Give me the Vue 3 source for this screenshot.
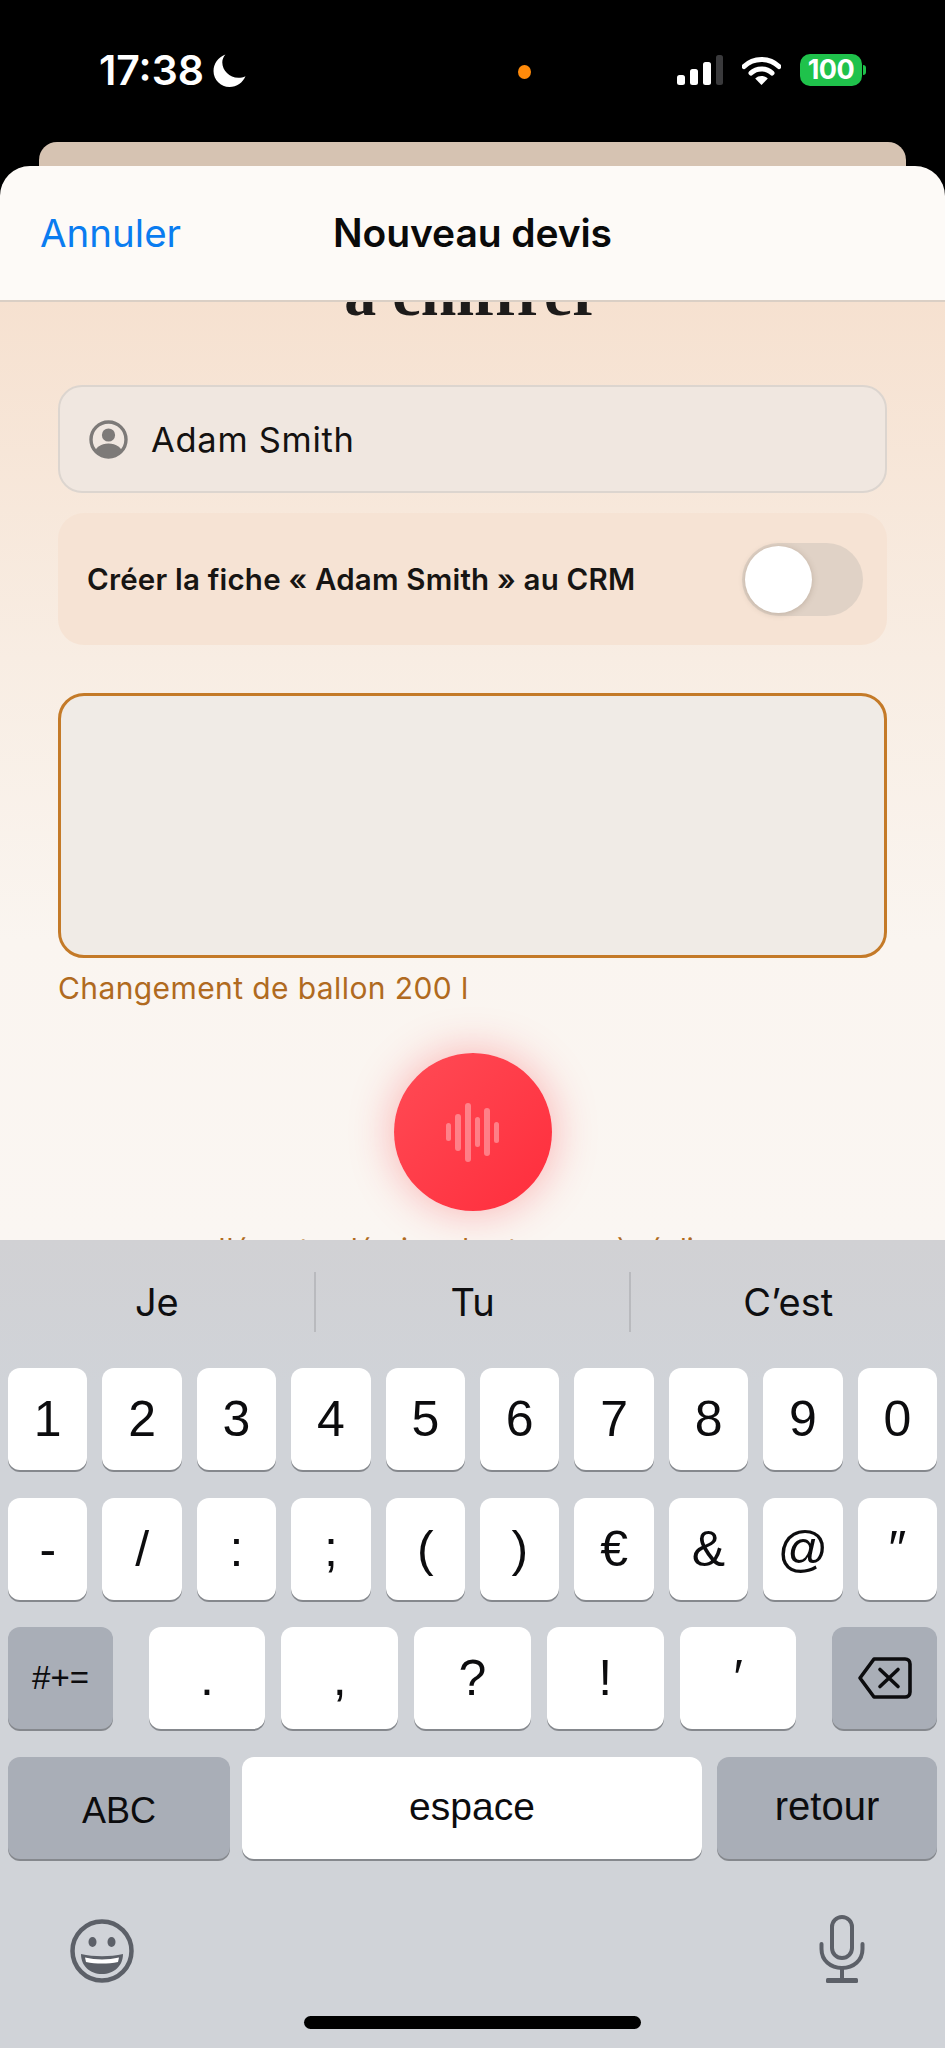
<template>
  <div class="phone">
    <div class="status">
      <div class="status-left">
        <span class="time">17:38</span>
        <svg class="moon" viewBox="0 0 32 32" width="33" height="33">
          <path d="M12 0.5C5 3 0.5 9.5 0.5 16.5C0.5 25 7.5 32 16 32C23 32 29 27.5 31.5 21.5C29.5 22.6 27 23 24.5 23C16 23 9 16 9 8C9 5.5 10.2 2.5 12 0.5Z" fill="#fff" />
        </svg>
      </div>
      <span class="cam-dot"></span>
      <div class="status-right">
        <svg width="46" height="30" viewBox="0 0 46 30">
          <rect x="0" y="20" width="8" height="10" rx="2.5" fill="#fff" />
          <rect x="13" y="14" width="8" height="16" rx="2.5" fill="#fff" />
          <rect x="26" y="7" width="8" height="23" rx="2.5" fill="#fff" />
          <rect x="39" y="0" width="7" height="30" rx="2.5" fill="#3a3a3c" />
        </svg>
        <svg width="39" height="29" viewBox="0 0 39 29">
          <path d="M2 10.5C11.5 1 27.5 1 37 10.5" fill="none" stroke="#fff" stroke-width="5" stroke-linecap="round" />
          <path d="M9 17C14.5 11.5 24.5 11.5 30 17" fill="none" stroke="#fff" stroke-width="5" stroke-linecap="round" />
          <path d="M13.2 22.5C16.5 19.2 22.5 19.2 25.8 22.5L19.5 29Z" fill="#fff" />
        </svg>
        <div class="battery">
          <span class="battery-body">100</span>
          <span class="battery-nub"></span>
        </div>
      </div>
    </div>

    <div class="back-card"></div>

    <section class="sheet">
      <header class="sheet-header">
        <span class="cancel">Annuler</span>
        <h1 class="sheet-title">Nouveau devis</h1>
      </header>

      <main class="sheet-body">
        <h2 class="peek-title">à chiffrer</h2>

        <div class="name-field">
          <svg class="person" viewBox="0 0 39 39" width="39" height="39">
            <defs>
              <clipPath id="person-clip"><circle cx="19.5" cy="19.5" r="17" /></clipPath>
            </defs>
            <circle cx="19.5" cy="19.5" r="17.5" fill="none" stroke="#7d7a78" stroke-width="3.4" />
            <circle cx="19.5" cy="15" r="6.6" fill="#7d7a78" />
            <ellipse cx="19.5" cy="34" rx="14" ry="10.5" fill="#7d7a78" clip-path="url(#person-clip)" />
          </svg>
          <span class="name-value">Adam Smith</span>
        </div>

        <div class="crm-row">
          <span class="crm-label">Créer la fiche « Adam Smith » au CRM</span>
          <div class="toggle"><span class="knob"></span></div>
        </div>

        <div class="notes"></div>
        <p class="transcript">Changement de ballon 200 l</p>

        <button class="record" type="button">
          <span
            v-for="(h, i) in waveBars"
            :key="i"
            class="wave-bar"
            :style="{ height: h + 'px' }"
          ></span>
        </button>

        <p class="hint">J'écoute, décrivez les travaux à réaliser</p>
      </main>
    </section>

    <section class="keyboard">
      <div class="suggestions">
        <span v-for="word in suggestions" :key="word" class="suggestion">{{ word }}</span>
      </div>

      <div class="rows">
        <div class="row">
          <span v-for="k in digits" :key="k" class="key">{{ k }}</span>
        </div>
        <div class="row">
          <span v-for="k in symbols" :key="k" class="key">{{ k }}</span>
        </div>
        <div class="row row-third">
          <span class="key key-dark key-switch">#+=</span>
          <div class="punct">
            <span v-for="k in punctuation" :key="k" class="key">{{ k }}</span>
          </div>
          <span class="key key-dark key-switch">
            <svg width="56" height="44" viewBox="0 0 56 44">
              <path d="M17 3H48C51 3 53 5 53 8V36C53 39 51 41 48 41H17L3 22Z" fill="none" stroke="#0c0c0e" stroke-width="3.6" stroke-linejoin="round" />
              <path d="M23 13.5L41 30.5M41 13.5L23 30.5" fill="none" stroke="#0c0c0e" stroke-width="3.6" stroke-linecap="round" />
            </svg>
          </span>
        </div>
        <div class="row row-bottom">
          <span class="key key-dark key-abc">ABC</span>
          <span class="key key-space">espace</span>
          <span class="key key-dark key-return">retour</span>
        </div>
      </div>

      <div class="kb-tools">
        <svg width="64" height="64" viewBox="0 0 64 64">
          <circle cx="32" cy="32" r="29.5" fill="none" stroke="#5c6068" stroke-width="4.5" />
          <ellipse cx="22.5" cy="23" rx="4" ry="5" fill="#5c6068" />
          <ellipse cx="41.5" cy="23" rx="4" ry="5" fill="#5c6068" />
          <path d="M11 35C24 38 40 38 53 35C53 47 44 55 32 55C20 55 11 47 11 35Z" fill="#5c6068" />
          <path d="M15 38.5C26 41 38 41 49 38.5L48 43C38 45 26 45 16 43Z" fill="#fff" />
        </svg>
        <svg width="46" height="68" viewBox="0 0 46 68">
          <rect x="13" y="2" width="20" height="41" rx="10" fill="none" stroke="#5c6068" stroke-width="4" />
          <path d="M2.5 29V34C2.5 45.5 11.5 53 23 53C34.5 53 43.5 45.5 43.5 34V29" fill="none" stroke="#5c6068" stroke-width="4" stroke-linecap="round" />
          <path d="M23 53V64" stroke="#5c6068" stroke-width="4" />
          <rect x="7" y="63" width="32" height="5" rx="1.5" fill="#5c6068" />
        </svg>
      </div>

      <div class="home-bar"></div>
    </section>
  </div>
</template>

<script setup>
const waveBars = [18, 37, 59, 30, 48, 21]
const suggestions = ['Je', 'Tu', 'C’est']
const digits = ['1', '2', '3', '4', '5', '6', '7', '8', '9', '0']
const symbols = ['-', '/', ':', ';', '(', ')', '€', '&', '@', '″']
const punctuation = ['.', ',', '?', '!', '′']
</script>

<style>
html,
body {
  margin: 0;
  background: #000;
}
</style>

<style scoped>
.phone {
  width: 945px;
  height: 2048px;
  overflow: hidden;
  display: flex;
  flex-direction: column;
  background: #000;
  font-family: "Liberation Sans", Arial, sans-serif;
}

/* status bar */
.status {
  height: 142px;
  box-sizing: border-box;
  padding: 54px 79px 0 99px;
  display: flex;
  align-items: flex-start;
  color: #fff;
  flex: none;
}
.status-left {
  width: 419px;
  height: 32px;
  display: flex;
  align-items: center;
  gap: 9px;
}
.time {
  font-family: Inter, sans-serif;
  font-weight: 600;
  font-size: 41px;
  letter-spacing: 0;
  line-height: 32px;
}
.cam-dot {
  width: 13px;
  height: 14px;
  margin-top: 11px;
  border-radius: 50%;
  background: #ff8a0a;
}
.status-right {
  margin-left: auto;
  height: 32px;
  display: flex;
  align-items: center;
  gap: 19px;
}
.battery {
  display: flex;
  align-items: center;
  gap: 1px;
}
.battery-body {
  width: 62px;
  height: 32px;
  border-radius: 10px;
  background: #1fc24b;
  color: #fff;
  font-family: Inter, sans-serif;
  font-weight: 700;
  font-size: 27px;
  line-height: 32px;
  text-align: center;
  letter-spacing: -0.5px;
}
.battery-nub {
  width: 3px;
  height: 10px;
  border-radius: 0 3px 3px 0;
  background: #1fc24b;
}

.back-card {
  flex: none;
  height: 24px;
  margin: 0 39px;
  border-radius: 18px 18px 0 0;
  background: #d6c3b2;
}

/* sheet */
.sheet {
  flex: none;
  height: 1074px;
  display: flex;
  flex-direction: column;
  overflow: hidden;
  border-radius: 30px 30px 0 0;
}
.sheet-header {
  flex: none;
  height: 136px;
  box-sizing: border-box;
  position: relative;
  display: flex;
  align-items: center;
  justify-content: center;
  background: #fdfaf7;
  border-bottom: 2px solid #dacfc5;
  z-index: 1;
}
.cancel {
  position: absolute;
  left: 40px;
  top: 42px;
  font-family: Inter, sans-serif;
  font-size: 38.5px;
  line-height: 50px;
  color: #0a7cf0;
}
.sheet-title {
  margin: 0;
  font-family: Inter, sans-serif;
  font-weight: 600;
  font-size: 39px;
  line-height: 50px;
  letter-spacing: -0.1px;
  color: #0a0a0a;
}
.sheet-body {
  flex: 1;
  min-height: 0;
  overflow: hidden;
  padding: 0 58px;
  display: flex;
  flex-direction: column;
  background: linear-gradient(#f6e1d0, #f8ede3 38%, #faf5f0 68%, #faf6f2);
}
.peek-title {
  flex: none;
  margin: -38px 0 61px;
  height: 60px;
  text-align: center;
  font-family: "Liberation Serif", serif;
  font-weight: 700;
  font-size: 64px;
  line-height: 60px;
  color: #1d1b1a;
}
.name-field {
  flex: none;
  height: 108px;
  box-sizing: border-box;
  padding: 0 29px;
  display: flex;
  align-items: center;
  gap: 23px;
  border: 2.5px solid #dcd5cf;
  border-radius: 24px;
  background: #f0e7e0;
}
.person {
  flex: none;
}
.name-value {
  font-family: Inter, sans-serif;
  font-size: 34.5px;
  letter-spacing: 0.7px;
  color: #141211;
}
.crm-row {
  flex: none;
  height: 132px;
  margin-top: 20px;
  box-sizing: border-box;
  padding: 0 24px 0 29px;
  display: flex;
  align-items: center;
  justify-content: space-between;
  border-radius: 26px;
  background: #f6e3d4;
}
.crm-label {
  font-family: Inter, sans-serif;
  font-weight: 600;
  font-size: 29.5px;
  letter-spacing: 0.2px;
  color: #171513;
}
.toggle {
  width: 121px;
  height: 73px;
  box-sizing: border-box;
  padding: 3px;
  border-radius: 37px;
  background: #e0d2c6;
}
.knob {
  display: block;
  width: 67px;
  height: 67px;
  border-radius: 50%;
  background: #fff;
  box-shadow: 0 1px 6px rgba(90, 70, 50, 0.25);
}
.notes {
  flex: none;
  height: 265px;
  margin-top: 48px;
  box-sizing: border-box;
  border: 3px solid #c47a28;
  border-radius: 26px;
  background: #f0ebe6;
}
.transcript {
  flex: none;
  margin: 12px 0 0;
  font-family: Inter, sans-serif;
  font-size: 30px;
  letter-spacing: 0.4px;
  line-height: 36px;
  color: #b06a20;
}
.record {
  flex: none;
  align-self: center;
  width: 158px;
  height: 158px;
  margin-top: 47px;
  padding: 0;
  border: none;
  border-radius: 50%;
  display: flex;
  align-items: center;
  justify-content: center;
  gap: 4px;
  background: linear-gradient(135deg, #ff4b55, #ff2d3c);
  box-shadow: 0 0 44px rgba(255, 50, 60, 0.36);
}
.wave-bar {
  width: 5.6px;
  border-radius: 3px;
  background: rgba(255, 255, 255, 0.35);
}
.hint {
  flex: none;
  margin: 20px 0 0;
  text-align: center;
  font-family: Inter, sans-serif;
  font-size: 28px;
  line-height: 36px;
  color: #b06a20;
  white-space: nowrap;
}

/* keyboard */
.keyboard {
  flex: 1;
  display: flex;
  flex-direction: column;
  background: linear-gradient(#d1d1d4, #d0d3d8 18%);
}
.suggestions {
  flex: none;
  height: 128px;
  box-sizing: border-box;
  padding: 32px 0 36px;
  display: flex;
}
.suggestion {
  flex: 1;
  display: flex;
  align-items: center;
  justify-content: center;
  font-family: Inter, sans-serif;
  font-size: 38px;
  color: #0e0e10;
  border-right: 2px solid #b9babe;
}
.suggestion:last-child {
  border-right: none;
}
.rows {
  flex: none;
  padding: 0 8px;
  display: flex;
  flex-direction: column;
  gap: 27.6px;
}
.row {
  height: 102px;
  display: flex;
  gap: 15px;
}
.key {
  flex: 1;
  display: flex;
  align-items: center;
  justify-content: center;
  border-radius: 12px;
  background: #fff;
  box-shadow: 0 2px 0 #85888d;
  font-size: 50px;
  color: #0c0c0e;
}
.key-dark {
  background: #a9aeb7;
}
.key-switch {
  flex: none;
  width: 105px;
  font-size: 33px;
}
.row-third {
  justify-content: space-between;
}
.punct {
  width: 648px;
  display: flex;
  gap: 16px;
}
.key-abc,
.key-space,
.key-return {
  flex: none;
  font-size: 36px;
}
.row-bottom {
  gap: 0;
  justify-content: space-between;
}
.key-abc {
  width: 222px;
  padding-top: 6px;
  box-sizing: border-box;
}
.key-space {
  width: 460px;
  margin-left: -3px;
  padding-bottom: 2px;
  box-sizing: border-box;
  font-size: 39px;
}
.key-return {
  width: 220px;
  padding-bottom: 2px;
  box-sizing: border-box;
  font-size: 40px;
}
.kb-tools {
  flex: none;
  margin-top: 56px;
  padding: 0 80px 0 70px;
  display: flex;
  align-items: flex-end;
  justify-content: space-between;
}
.home-bar {
  flex: none;
  align-self: center;
  width: 337px;
  height: 13px;
  margin-top: 33px;
  border-radius: 7px;
  background: #000;
}
</style>
